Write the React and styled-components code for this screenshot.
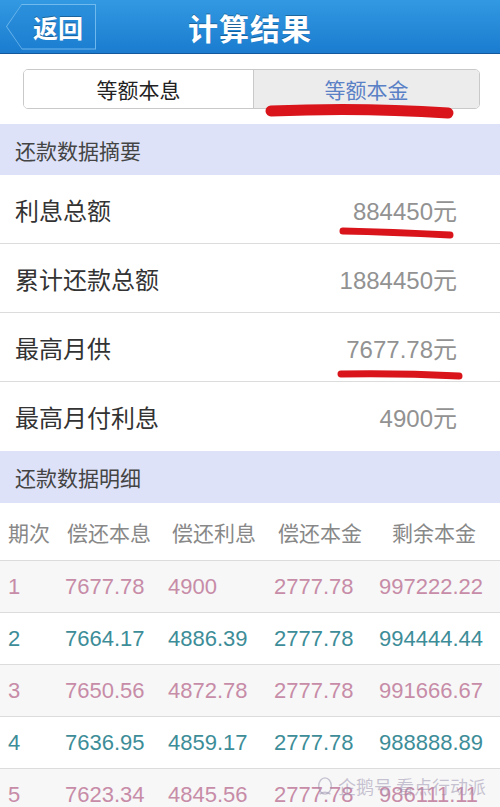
import React from 'react';
import styled, { createGlobalStyle } from 'styled-components';

const GlobalStyle = createGlobalStyle`
  html, body {
    margin: 0;
    padding: 0;
    background: #fff;
    overflow: hidden;
  }
  body {
    font-family: "Liberation Sans", "Noto Sans CJK SC", sans-serif;
  }
`;

const Page = styled.div`
  position: relative;
  width: 500px;
  height: 807px;
  overflow: hidden;
  background: #fff;
`;

const NavBar = styled.header`
  height: 54px;
  display: grid;
  grid-template-columns: 120px 1fr 120px;
  align-items: center;
  background: linear-gradient(#3299e2, #1b7ccf);
  border-bottom: 1px solid #13589a;
  box-sizing: border-box;
`;

// outer shape is the light edge, inner shape is the fill
const BackEdge = styled.div`
  margin-left: 6px;
  width: 90px;
  height: 46px;
  padding: 1px;
  box-sizing: border-box;
  background: rgba(120, 190, 240, 0.9);
  clip-path: polygon(16px 0, 100% 0, 100% 100%, 16px 100%, 0 50%);
`;

const BackButton = styled.button`
  width: 100%;
  height: 100%;
  border: none;
  padding: 0 0 0 14px;
  color: #fff;
  font-size: 25px;
  font-weight: bold;
  font-family: "Noto Sans CJK SC", sans-serif;
  background: linear-gradient(#2b90dc, #1d7fd1);
  clip-path: polygon(15px 0, 100% 0, 100% 100%, 15px 100%, 0 50%);
  text-shadow: 0 -1px 0 rgba(0, 0, 0, 0.3);
`;

const Title = styled.h1`
  margin: 0;
  text-align: center;
  color: #fff;
  font-size: 30px;
  font-weight: bold;
  font-family: "Noto Sans CJK SC", sans-serif;
  letter-spacing: 1px;
  text-shadow: 0 -1px 0 rgba(0, 0, 0, 0.3);
`;

const SegmentWrap = styled.div`
  padding: 15px 20px 15px 23px;
`;

const Segment = styled.div`
  display: grid;
  grid-template-columns: 229px 1fr;
  height: 40px;
  border: 1px solid #c9c9c9;
  border-radius: 5px;
  overflow: hidden;
  box-sizing: border-box;
`;

const SegmentItem = styled.div`
  display: flex;
  align-items: center;
  justify-content: center;
  font-size: 21px;
  font-family: "Noto Sans CJK SC", sans-serif;
  color: ${(p) => (p.$active ? '#5a80c6' : '#222')};
  background: ${(p) => (p.$active ? '#ececec' : '#fff')};
  border-left: ${(p) => (p.$active ? '1px solid #c9c9c9' : 'none')};
`;

const SectionHeader = styled.div`
  height: ${(p) => p.$h || 51}px;
  display: flex;
  align-items: center;
  padding-left: 15px;
  background: #dde2f8;
  color: #444;
  font-size: 21px;
  font-family: "Noto Sans CJK SC", sans-serif;
`;

const SummaryRow = styled.div`
  height: 69px;
  display: flex;
  align-items: center;
  justify-content: space-between;
  padding: 0 43px 0 15px;
  border-bottom: ${(p) => (p.$last ? 'none' : '1px solid #dcdcdc')};
  box-sizing: border-box;
`;

const Label = styled.span`
  font-size: 24px;
  color: #333;
  font-family: "Noto Sans CJK SC", sans-serif;
`;

const Value = styled.span`
  font-size: 24px;
  color: #929292;
  font-family: "Liberation Sans", "Noto Sans CJK SC", sans-serif;
`;

const TableHead = styled.div`
  height: 58px;
  display: grid;
  grid-template-columns: 59px 105px 106px 114px 1fr;
  align-items: center;
  padding-left: 8px;
  border-bottom: 1px solid #dcdcdc;
  box-sizing: border-box;
  color: #888;
  font-size: 21px;
  font-family: "Noto Sans CJK SC", sans-serif;
`;

const TableRow = styled.div`
  height: 52px;
  display: grid;
  grid-template-columns: 57px 103px 106px 105px 1fr;
  align-items: center;
  padding-left: 8px;
  border-bottom: 1px solid #dcdcdc;
  box-sizing: border-box;
  background: ${(p) => (p.$odd ? '#f7f7f7' : '#fff')};
  color: ${(p) => (p.$odd ? '#c78ca7' : '#3d8d98')};
  font-size: 22px;
  font-family: "Liberation Sans", sans-serif;
`;

const Marks = styled.svg`
  position: absolute;
  left: 0;
  top: 0;
  pointer-events: none;
`;

const Watermark = styled.div`
  position: absolute;
  right: 14px;
  bottom: 8px;
  display: flex;
  align-items: center;
  gap: 4px;
  color: rgba(150, 140, 170, 0.5);
  font-size: 18px;
  font-family: "Noto Sans CJK SC", sans-serif;
  pointer-events: none;
`;

const summary = [
  ['利息总额', '884450元'],
  ['累计还款总额', '1884450元'],
  ['最高月供', '7677.78元'],
  ['最高月付利息', '4900元'],
];

const rows = [
  ['1', '7677.78', '4900', '2777.78', '997222.22'],
  ['2', '7664.17', '4886.39', '2777.78', '994444.44'],
  ['3', '7650.56', '4872.78', '2777.78', '991666.67'],
  ['4', '7636.95', '4859.17', '2777.78', '988888.89'],
  ['5', '7623.34', '4845.56', '2777.78', '986111.11'],
];

const App = () => (
  <Page>
    <GlobalStyle />
    <NavBar>
      <BackEdge>
        <BackButton>返回</BackButton>
      </BackEdge>
      <Title>计算结果</Title>
      <span />
    </NavBar>
    <SegmentWrap>
      <Segment>
        <SegmentItem>等额本息</SegmentItem>
        <SegmentItem $active>等额本金</SegmentItem>
      </Segment>
    </SegmentWrap>
    <SectionHeader>还款数据摘要</SectionHeader>
    {summary.map(([label, value], i) => (
      <SummaryRow key={label} $last={i === summary.length - 1}>
        <Label>{label}</Label>
        <Value>{value}</Value>
      </SummaryRow>
    ))}
    <SectionHeader $h={52}>还款数据明细</SectionHeader>
    <TableHead>
      <span>期次</span>
      <span>偿还本息</span>
      <span>偿还利息</span>
      <span>偿还本金</span>
      <span>剩余本金</span>
    </TableHead>
    {rows.map((r, i) => (
      <TableRow key={r[0]} $odd={i % 2 === 0}>
        {r.map((c, j) => (
          <span key={j}>{c}</span>
        ))}
      </TableRow>
    ))}
    <Marks width="500" height="807" viewBox="0 0 500 807">
      <path d="M271 111 Q360 107 448 113" stroke="#d9141b" strokeWidth="11" strokeLinecap="round" fill="none" />
      <path d="M343 231 Q390 232 450 235" stroke="#d9141b" strokeWidth="7" strokeLinecap="round" fill="none" />
      <path d="M341 374 Q400 373 459 376" stroke="#d9141b" strokeWidth="7" strokeLinecap="round" fill="none" />
    </Marks>
    <Watermark>
      <svg width="18" height="20" viewBox="0 0 20 22">
        <ellipse cx="10" cy="11" rx="7" ry="9" fill="none" stroke="rgba(150,140,170,0.5)" strokeWidth="1.5" />
        <path d="M4 20 Q10 16 16 20" fill="none" stroke="rgba(150,140,170,0.5)" strokeWidth="1.5" />
      </svg>
      <span>企鹅号 看点行动派</span>
    </Watermark>
  </Page>
);

export default App;
